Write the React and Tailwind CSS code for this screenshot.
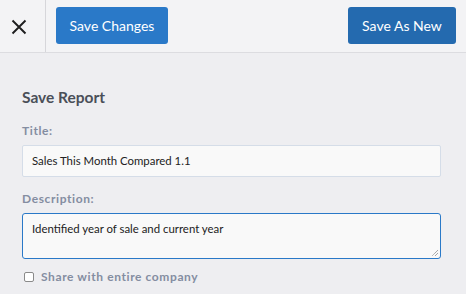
import React from "react";

export default function App() {
  return (
    <div className="w-[466px] h-[294px] bg-[#eeeef1] overflow-hidden" style={{ fontFamily: "Lato, 'Open Sans', sans-serif" }}>
      <div className="h-[53px] bg-[#f3f3f5] border-b border-[#dcdce0] flex items-stretch">
        <div className="w-[46px] border-r border-[#d6d6da] flex items-center pl-[11px]">
          <svg width="16" height="16" viewBox="0 0 16 16" className="mt-[1px]">
            <path d="M1.5 1.5 L14.5 14.5 M14.5 1.5 L1.5 14.5" stroke="#1e1e1e" strokeWidth="1.9" strokeLinecap="butt" />
          </svg>
        </div>
        <div className="flex-1 flex items-center justify-between pl-[10px] pr-[10px]">
          <button className="h-[37px] w-[112px] rounded-[3px] bg-[#2a79c8] text-white text-[14px] mb-[1px]">Save Changes</button>
          <button className="h-[37px] w-[108px] rounded-[3px] bg-[#246aaf] text-white text-[14px] mb-[1px]">Save As New</button>
        </div>
      </div>
      <div className="pl-[22px] pr-[25px] pt-[34px]">
        <div className="text-[15.5px] leading-[20px] font-bold text-[#4a4f58]">Save Report</div>
        <div className="mt-[17px] text-[12px] leading-[14px] font-bold tracking-[0.6px] text-[#848da1]">Title:</div>
        <div className="mt-[7px] h-[32px] bg-[#f9f9f9] border border-[#d5dde8] rounded-[2px] flex items-center pl-[9px] text-[11.4px] text-[#222]">
          Sales This Month Compared 1.1
        </div>
        <div className="mt-[15px] text-[12px] leading-[14px] font-bold tracking-[0.6px] text-[#848da1]">Description:</div>
        <div className="relative mt-[7px] h-[46px] bg-[#f9f9f9] border-[1.5px] border-[#2a79c8] rounded-[3px] pl-[9px] pt-[6px] text-[11.4px] leading-[18px] text-[#222]">
          Identified year of sale and current year
          <svg width="8" height="8" viewBox="0 0 8 8" className="absolute right-[1px] bottom-[1px]">
            <path d="M7 1 L1 7 M7 4 L4 7" stroke="#666" strokeWidth="0.8" strokeDasharray="1 0.6" />
          </svg>
        </div>
        <div className="mt-[9px] flex items-center">
          <div className="ml-[2px] w-[10px] h-[10px] border border-[#8a8a8a] rounded-[2px] bg-white" />
          <div className="ml-[7px] text-[12px] font-bold tracking-[0.6px] text-[#848da1]">Share with entire company</div>
        </div>
      </div>
    </div>
  );
}
